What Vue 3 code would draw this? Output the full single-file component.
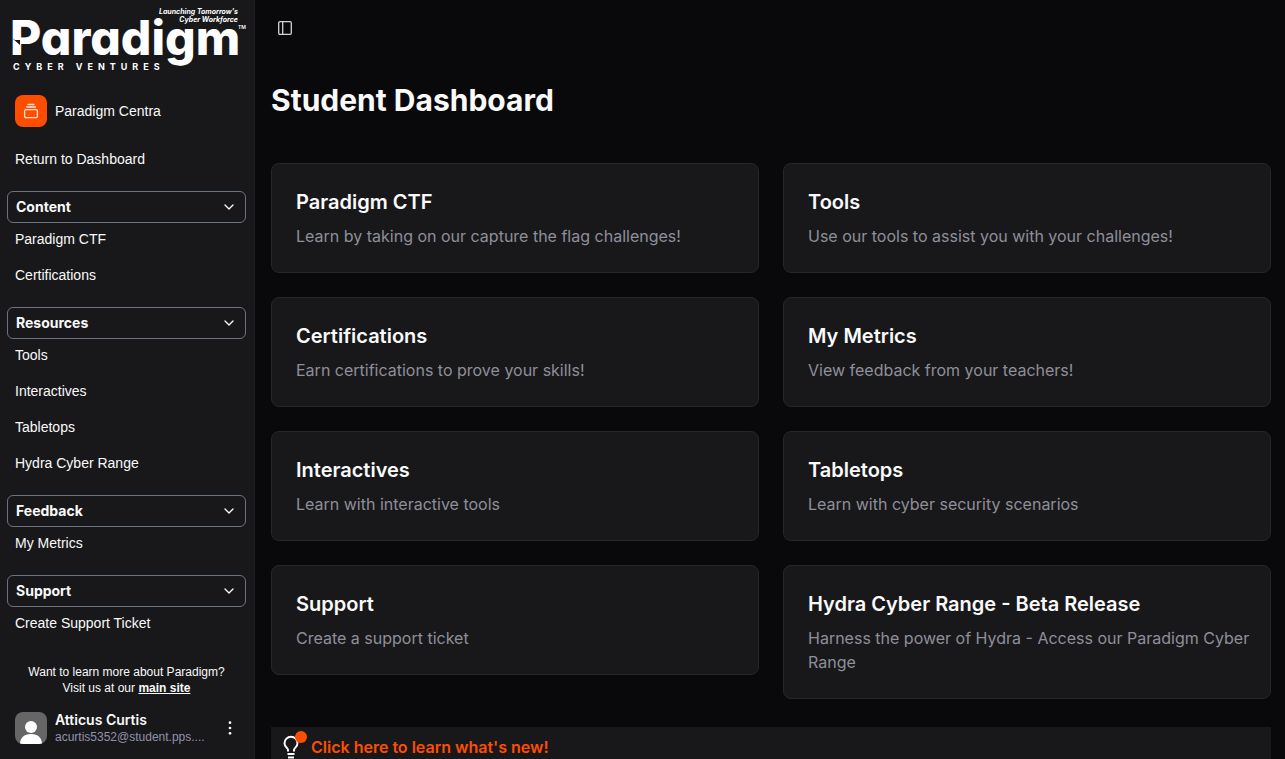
<script setup>
import { ref } from 'vue'

const groups = ref([
  { title: 'Content', open: true, items: ['Paradigm CTF', 'Certifications'] },
  { title: 'Resources', open: true, items: ['Tools', 'Interactives', 'Tabletops', 'Hydra Cyber Range'] },
  { title: 'Feedback', open: true, items: ['My Metrics'] },
  { title: 'Support', open: true, items: ['Create Support Ticket'] },
])

const cards = [
  { title: 'Paradigm CTF', text: 'Learn by taking on our capture the flag challenges!' },
  { title: 'Tools', text: 'Use our tools to assist you with your challenges!' },
  { title: 'Certifications', text: 'Earn certifications to prove your skills!' },
  { title: 'My Metrics', text: 'View feedback from your teachers!' },
  { title: 'Interactives', text: 'Learn with interactive tools' },
  { title: 'Tabletops', text: 'Learn with cyber security scenarios' },
  { title: 'Support', text: 'Create a support ticket' },
  { title: 'Hydra Cyber Range - Beta Release', text: 'Harness the power of Hydra - Access our Paradigm Cyber Range' },
]
</script>

<template>
  <div class="app">
    <aside class="sidebar">
      <a href="#" class="logo" aria-label="Paradigm Cyber Ventures">
        <svg viewBox="0 0 255 79" width="255" height="79">
          <g fill="#fff">
            <text class="word" x="10" y="55">Paradigm</text>
            <text class="tag" x="238" y="14" text-anchor="end">Launching Tomorrow's</text>
            <text class="tag" x="238" y="22" text-anchor="end">Cyber Workforce</text>
            <text class="tm" x="238" y="29">TM</text>
            <text class="sub" x="13" y="70">CYBER VENTURES</text>
          </g>
          <path d="M12 38l8 7v-5h-5z" fill="#18181b" />
        </svg>
      </a>

      <a href="#" class="team">
        <span class="team-icon">
          <svg viewBox="0 0 16 16" width="16" height="16" fill="none" stroke="#ffe4d6" stroke-width="1.300" stroke-linecap="round" stroke-linejoin="round">
            <rect x="1.600" y="6.600" width="12.800" height="8" rx="1.300" />
            <path d="M3.500 4h9M5 1.500h6" />
          </svg>
        </span>
        <span>Paradigm Centra</span>
      </a>

      <nav class="nav">
        <a href="#" class="item">Return to Dashboard</a>
        <section v-for="g in groups" :key="g.title" class="group">
          <button class="group-head" type="button" :aria-expanded="g.open" @click="g.open = !g.open">
            <span>{{ g.title }}</span>
            <svg viewBox="0 0 24 24" width="16" height="16" fill="none" stroke="currentColor" stroke-width="2" stroke-linecap="round" stroke-linejoin="round"><path d="m6 9 6 6 6-6" /></svg>
          </button>
          <div v-if="g.open" class="items">
            <a v-for="i in g.items" :key="i" href="#" class="item">{{ i }}</a>
          </div>
        </section>
      </nav>

      <footer class="foot">
        <p class="more">Want to learn more about Paradigm?<br />Visit us at our <a href="#">main site</a></p>
        <button class="user" type="button">
          <svg class="avatar" viewBox="0 0 32 32" width="32" height="32">
            <rect width="32" height="32" fill="#666" />
            <circle cx="16" cy="15" r="6" fill="#fff" />
            <path d="M5 32c0-6 4-10 11-10s11 4 11 10z" fill="#fff" />
          </svg>
          <span class="who">
            <span class="name">Atticus Curtis</span>
            <span class="mail">acurtis5352@student.pps....</span>
          </span>
          <svg class="dots" viewBox="0 0 24 24" width="16" height="16" fill="currentColor"><circle cx="12" cy="4" r="2" /><circle cx="12" cy="12" r="2" /><circle cx="12" cy="20" r="2" /></svg>
        </button>
      </footer>
    </aside>

    <main class="main">
      <button class="toggle" type="button" aria-label="Toggle Sidebar">
        <svg viewBox="0 0 16 16" width="16" height="16" fill="none" stroke="#d4d4d8" stroke-width="1.300"><rect x="1.700" y="1.700" width="12.600" height="12.600" rx="1.300" /><path d="M5.700 1.700v12.600" /></svg>
      </button>
      <h1>Student Dashboard</h1>
      <div class="grid">
        <a v-for="c in cards" :key="c.title" href="#" class="card">
          <h2>{{ c.title }}</h2>
          <p>{{ c.text }}</p>
        </a>
      </div>
      <button class="news" type="button">
        <span class="bulb">
          <svg viewBox="0 0 24 24" width="24" height="24" fill="none" stroke="#fff" stroke-width="2" stroke-linecap="butt" stroke-linejoin="round"><path d="M9 16.500v-1.700c0-1.600-3.500-2.800-3.500-6.600a6.500 6.500 0 0 1 13 0c0 3.800-3.500 5-3.500 6.600v1.700M8.500 19h7M9 22.500h6" /></svg>
          <i class="badge"></i>
        </span>
        <span>Click here to learn what's new!</span>
      </button>
    </main>
  </div>
</template>

<style>
body { background: #09090b; }
</style>

<style scoped>
* { box-sizing: border-box; }
.app {
  display: flex;
  height: 100vh;
  overflow: hidden;
  background: #09090b;
  color: #fafafa;
  font-family: Inter, "Liberation Sans", sans-serif;
  font-size: 14px;
  line-height: 20px;
}
a { color: inherit; text-decoration: none; }
button { font: inherit; color: inherit; background: none; border: 0; padding: 0; cursor: pointer; text-align: left; }
h1, h2, p { margin: 0; }
svg { display: block; flex: none; }
.sidebar {
  flex: none;
  width: 255px;
  display: flex;
  flex-direction: column;
  background: #18181b;
  border-right: 1px solid #202024;
  font-family: "Liberation Sans", sans-serif;
}
.logo { height: 79px; overflow: hidden; }
.word { font: 800 48px Inter, sans-serif; font-feature-settings: "cv11"; }
.tag { font: italic 700 7px Inter, sans-serif; }
.tm { font: 600 5px Inter, sans-serif; }
.sub { font: 700 9px Inter, sans-serif; letter-spacing: 5px; }
.team { display: flex; align-items: center; gap: 8px; padding: 16px 15px; }
.team-icon { display: grid; place-items: center; width: 32px; height: 32px; border-radius: 8px; background: #ff4d00; }
.nav { display: flex; flex-direction: column; gap: 16px; flex: 1; padding: 0 8px 0 7px; min-height: 0; overflow: hidden; }
.item { display: flex; align-items: center; flex: none; height: 32px; padding: 0 8px; }
.items { display: flex; flex-direction: column; gap: 4px; }
.group-head {
  display: flex;
  align-items: center;
  justify-content: space-between;
  width: 100%;
  height: 32px;
  padding: 0 8px;
  border: 1px solid #6b7280;
  border-radius: 6px;
  font-family: Inter, sans-serif;
  font-weight: 700;
}
.foot { padding: 0 8px 7px 7px; }
.more { padding-bottom: 8px; text-align: center; font-size: 12px; line-height: 16px; }
.more a { font-weight: 700; text-decoration: underline; }
.user { display: flex; align-items: center; gap: 8px; width: 100%; height: 48px; padding: 0 8px; }
.avatar { border-radius: 8px; }
.who { display: grid; flex: 1; min-width: 0; line-height: 18px; }
.name { font-family: Inter, sans-serif; font-weight: 600; }
.mail { overflow: hidden; text-overflow: ellipsis; white-space: nowrap; font-size: 12px; line-height: 16px; color: #9191ab; }
.main { flex: 1; min-width: 0; padding: 14px 14px 0 16px; overflow: hidden; }
.toggle { display: grid; place-items: center; width: 28px; height: 28px; }
h1 { padding: 40px 0 45px; font-size: 30px; line-height: 36px; font-weight: 700; }
.grid { display: grid; grid-template-columns: 1fr 1fr; gap: 24px; align-items: start; }
.card { padding: 24px 12px 24px 24px; border: 1px solid #27272a; border-radius: 8px; background: #18181b; }
h2 { margin-bottom: 8px; font-size: 20px; line-height: 28px; font-weight: 600; }
.card p { font-size: 16px; line-height: 24px; color: #8f8f99; }
.news {
  display: flex;
  align-items: center;
  gap: 8px;
  width: 100%;
  margin-top: 28px;
  padding: 8px;
  background: #18181b;
  color: #ff4d00;
  font-size: 16px;
  line-height: 24px;
  font-weight: 600;
}
.bulb { position: relative; }
.badge { position: absolute; top: -4px; right: -4px; width: 12px; height: 12px; border-radius: 50%; background: #ff4d00; }
</style>
